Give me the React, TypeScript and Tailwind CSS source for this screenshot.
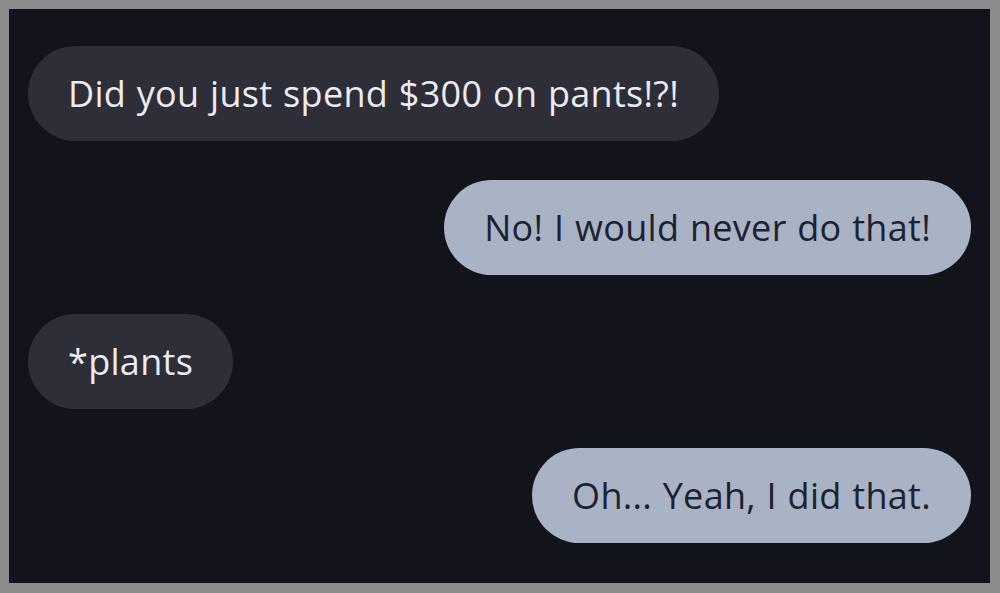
export default function App() {
  const messages = [
    { text: "Did you just spend $300 on pants!?!", mine: false },
    { text: "No! I would never do that!", mine: true },
    { text: "*plants", mine: false },
    { text: "Oh... Yeah, I did that.", mine: true },
  ];

  return (
    <div className="w-[1000px] h-[593px] bg-[#8b8b8b] p-[9px] pr-[10px] pb-[10px]">
      <div
        className="h-full bg-[#13131c] flex flex-col gap-[39px] pt-[37px] px-[19px]"
        style={{ fontFamily: "'Open Sans', Roboto, sans-serif" }}>
        {messages.map((m, i) => (
          <div key={i} className={`flex ${m.mine ? "justify-end" : "justify-start"}`}>
            <div
              className={`h-[95px] flex items-center px-10 rounded-full text-[36px] tracking-[0.3px] [word-spacing:1px] ${
                m.mine
                  ? "bg-[#a9b3c5] text-[#1c2232]"
                  : "bg-[#2e2e38] text-[#ebebf0]"
              }`}>
              {m.text}
            </div>
          </div>
        ))}
      </div>
    </div>
  );
}
